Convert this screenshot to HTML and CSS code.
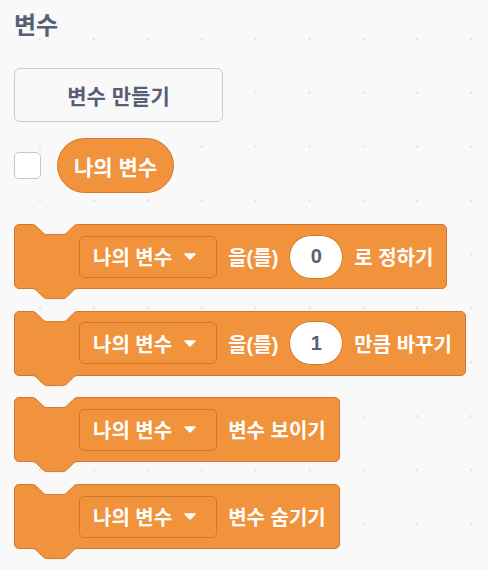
FILE: index.html
```html
<!DOCTYPE html>
<html lang="ko">
<head>
<meta charset="utf-8">
<link rel="stylesheet" href="styles.css">
</head>
<body>
<div class="palette">
  <div class="title">변수</div>
  <div class="make-btn">변수 만들기</div>
  <div class="var-row">
    <span class="check"></span>
    <span class="reporter">나의 변수</span>
  </div>
  <div class="stack">
    <div class="block">
      <svg class="notch" width="48" height="12" viewBox="0 0 48 12"><path class="notch-fill" d="M0,0 L0,0.5 C2.5,0.5 3.8,1.8 5.1,3 L10.2,8.1 C11.5,9.4 12.7,10.6 15.3,10.6 H30.5 C33.1,10.6 34.3,9.4 35.6,8.1 L40.7,3 C42,1.8 43.2,0.5 45.8,0.5 L45.8,0 Z"/><path class="notch-line" d="M0,0.5 C2.5,0.5 3.8,1.8 5.1,3 L10.2,8.1 C11.5,9.4 12.7,10.6 15.3,10.6 H30.5 C33.1,10.6 34.3,9.4 35.6,8.1 L40.7,3 C42,1.8 43.2,0.5 45.8,0.5"/></svg>
      <span class="dropdown">나의 변수<svg class="arrow" width="12" height="7" viewBox="0 0 12 7"><path d="M1,1 L11,1 L6,6 Z"/></svg></span>
      <span class="label">을(를)</span>
      <span class="oval">0</span>
      <span class="label">로 정하기</span>
      <svg class="tab" width="48" height="12" viewBox="0 0 48 12"><path class="tab-fill" d="M0,0 L0,0.5 C2.5,0.5 3.8,1.8 5.1,3 L10.2,8.1 C11.5,9.4 12.7,10.6 15.3,10.6 H30.5 C33.1,10.6 34.3,9.4 35.6,8.1 L40.7,3 C42,1.8 43.2,0.5 45.8,0.5 L45.8,0 Z"/><path class="tab-line" d="M0,0.5 C2.5,0.5 3.8,1.8 5.1,3 L10.2,8.1 C11.5,9.4 12.7,10.6 15.3,10.6 H30.5 C33.1,10.6 34.3,9.4 35.6,8.1 L40.7,3 C42,1.8 43.2,0.5 45.8,0.5"/></svg>
    </div>
    <div class="block">
      <svg class="notch" width="48" height="12" viewBox="0 0 48 12"><path class="notch-fill" d="M0,0 L0,0.5 C2.5,0.5 3.8,1.8 5.1,3 L10.2,8.1 C11.5,9.4 12.7,10.6 15.3,10.6 H30.5 C33.1,10.6 34.3,9.4 35.6,8.1 L40.7,3 C42,1.8 43.2,0.5 45.8,0.5 L45.8,0 Z"/><path class="notch-line" d="M0,0.5 C2.5,0.5 3.8,1.8 5.1,3 L10.2,8.1 C11.5,9.4 12.7,10.6 15.3,10.6 H30.5 C33.1,10.6 34.3,9.4 35.6,8.1 L40.7,3 C42,1.8 43.2,0.5 45.8,0.5"/></svg>
      <span class="dropdown">나의 변수<svg class="arrow" width="12" height="7" viewBox="0 0 12 7"><path d="M1,1 L11,1 L6,6 Z"/></svg></span>
      <span class="label">을(를)</span>
      <span class="oval">1</span>
      <span class="label">만큼 바꾸기</span>
      <svg class="tab" width="48" height="12" viewBox="0 0 48 12"><path class="tab-fill" d="M0,0 L0,0.5 C2.5,0.5 3.8,1.8 5.1,3 L10.2,8.1 C11.5,9.4 12.7,10.6 15.3,10.6 H30.5 C33.1,10.6 34.3,9.4 35.6,8.1 L40.7,3 C42,1.8 43.2,0.5 45.8,0.5 L45.8,0 Z"/><path class="tab-line" d="M0,0.5 C2.5,0.5 3.8,1.8 5.1,3 L10.2,8.1 C11.5,9.4 12.7,10.6 15.3,10.6 H30.5 C33.1,10.6 34.3,9.4 35.6,8.1 L40.7,3 C42,1.8 43.2,0.5 45.8,0.5"/></svg>
    </div>
    <div class="block">
      <svg class="notch" width="48" height="12" viewBox="0 0 48 12"><path class="notch-fill" d="M0,0 L0,0.5 C2.5,0.5 3.8,1.8 5.1,3 L10.2,8.1 C11.5,9.4 12.7,10.6 15.3,10.6 H30.5 C33.1,10.6 34.3,9.4 35.6,8.1 L40.7,3 C42,1.8 43.2,0.5 45.8,0.5 L45.8,0 Z"/><path class="notch-line" d="M0,0.5 C2.5,0.5 3.8,1.8 5.1,3 L10.2,8.1 C11.5,9.4 12.7,10.6 15.3,10.6 H30.5 C33.1,10.6 34.3,9.4 35.6,8.1 L40.7,3 C42,1.8 43.2,0.5 45.8,0.5"/></svg>
      <span class="dropdown">나의 변수<svg class="arrow" width="12" height="7" viewBox="0 0 12 7"><path d="M1,1 L11,1 L6,6 Z"/></svg></span>
      <span class="label">변수 보이기</span>
      <svg class="tab" width="48" height="12" viewBox="0 0 48 12"><path class="tab-fill" d="M0,0 L0,0.5 C2.5,0.5 3.8,1.8 5.1,3 L10.2,8.1 C11.5,9.4 12.7,10.6 15.3,10.6 H30.5 C33.1,10.6 34.3,9.4 35.6,8.1 L40.7,3 C42,1.8 43.2,0.5 45.8,0.5 L45.8,0 Z"/><path class="tab-line" d="M0,0.5 C2.5,0.5 3.8,1.8 5.1,3 L10.2,8.1 C11.5,9.4 12.7,10.6 15.3,10.6 H30.5 C33.1,10.6 34.3,9.4 35.6,8.1 L40.7,3 C42,1.8 43.2,0.5 45.8,0.5"/></svg>
    </div>
    <div class="block">
      <svg class="notch" width="48" height="12" viewBox="0 0 48 12"><path class="notch-fill" d="M0,0 L0,0.5 C2.5,0.5 3.8,1.8 5.1,3 L10.2,8.1 C11.5,9.4 12.7,10.6 15.3,10.6 H30.5 C33.1,10.6 34.3,9.4 35.6,8.1 L40.7,3 C42,1.8 43.2,0.5 45.8,0.5 L45.8,0 Z"/><path class="notch-line" d="M0,0.5 C2.5,0.5 3.8,1.8 5.1,3 L10.2,8.1 C11.5,9.4 12.7,10.6 15.3,10.6 H30.5 C33.1,10.6 34.3,9.4 35.6,8.1 L40.7,3 C42,1.8 43.2,0.5 45.8,0.5"/></svg>
      <span class="dropdown">나의 변수<svg class="arrow" width="12" height="7" viewBox="0 0 12 7"><path d="M1,1 L11,1 L6,6 Z"/></svg></span>
      <span class="label">변수 숨기기</span>
      <svg class="tab" width="48" height="12" viewBox="0 0 48 12"><path class="tab-fill" d="M0,0 L0,0.5 C2.5,0.5 3.8,1.8 5.1,3 L10.2,8.1 C11.5,9.4 12.7,10.6 15.3,10.6 H30.5 C33.1,10.6 34.3,9.4 35.6,8.1 L40.7,3 C42,1.8 43.2,0.5 45.8,0.5 L45.8,0 Z"/><path class="tab-line" d="M0,0.5 C2.5,0.5 3.8,1.8 5.1,3 L10.2,8.1 C11.5,9.4 12.7,10.6 15.3,10.6 H30.5 C33.1,10.6 34.3,9.4 35.6,8.1 L40.7,3 C42,1.8 43.2,0.5 45.8,0.5"/></svg>
    </div>
  </div>
  <div class="next-btn"></div>
</div>
</body>
</html>
```

FILE: styles.css
```css
html, body {
  margin: 0;
  padding: 0;
}
body {
  width: 488px;
  height: 570px;
  overflow: hidden;
  background-color: #f9f9f9;
  background-image: radial-gradient(circle, #e2e2e2 0.9px, rgba(249,249,249,0) 1.6px);
  background-size: 53.9px 53.9px;
  background-position: 13px 12px;
  font-family: "Liberation Sans", "Noto Sans CJK KR", sans-serif;
}
.palette {
  padding: 11px 0 0 14px;
}
.title {
  height: 29px;
  line-height: 29px;
  font-size: 24px;
  font-weight: 700;
  color: #575e75;
}
.make-btn {
  margin-top: 28px;
  width: 209px;
  height: 54px;
  box-sizing: border-box;
  display: flex;
  align-items: center;
  justify-content: center;
  border: 1px solid #cbcbcb;
  border-radius: 6px;
  background: #f9f9f9;
  color: #575e75;
  font-size: 21px;
  font-weight: 700;
}
.var-row {
  margin-top: 16px;
  height: 55px;
  display: flex;
  align-items: center;
  gap: 16px;
}
.check {
  width: 27px;
  height: 27px;
  box-sizing: border-box;
  border: 1px solid #c8c8c8;
  border-radius: 5px;
  background: #ffffff;
}
.reporter {
  height: 55px;
  box-sizing: border-box;
  padding: 0 16px;
  display: flex;
  align-items: center;
  border: 1px solid #d5772b;
  border-radius: 28px;
  background: #f1923c;
  color: #ffffff;
  font-size: 21px;
  font-weight: 700;
}
.stack {
  margin-top: 31px;
  display: flex;
  flex-direction: column;
  align-items: flex-start;
  gap: 21.7px;
}
.block {
  position: relative;
  height: 65px;
  box-sizing: border-box;
  padding: 0 13px 0 64px;
  display: flex;
  align-items: center;
  gap: 11px;
  border: 1px solid #d5772b;
  border-radius: 5px;
  background: #f1923c;
  color: #ffffff;
  font-size: 20px;
  font-weight: 700;
  white-space: nowrap;
}
.notch {
  position: absolute;
  top: -1px;
  left: 17px;
  overflow: visible;
}
.notch-fill { fill: #f9f9f9; }
.notch-line, .tab-line {
  fill: none;
  stroke: #d5772b;
  stroke-width: 1;
}
.tab {
  position: absolute;
  bottom: -12px;
  left: 17px;
  overflow: visible;
}
.tab-fill { fill: #f1923c; }
.dropdown {
  height: 42px;
  box-sizing: border-box;
  padding: 0 20px 0 13px;
  display: flex;
  align-items: center;
  gap: 12px;
  border: 1px solid #d5772b;
  border-radius: 5px;
  background: #f1923c;
}
.arrow path {
  fill: #ffffff;
  stroke: #ffffff;
  stroke-width: 1.5;
  stroke-linejoin: round;
}
.label {
  display: block;
}
.oval {
  width: 54px;
  height: 44px;
  box-sizing: border-box;
  display: flex;
  align-items: center;
  justify-content: center;
  border: 1px solid #d5772b;
  border-radius: 22px;
  background: #ffffff;
  color: #575e75;
  font-size: 20px;
}
.next-btn {
  margin-top: 20.5px;
  margin-left: 4px;
  width: 220px;
  height: 6px;
  border-top: 1px solid #dedede;
}
```
